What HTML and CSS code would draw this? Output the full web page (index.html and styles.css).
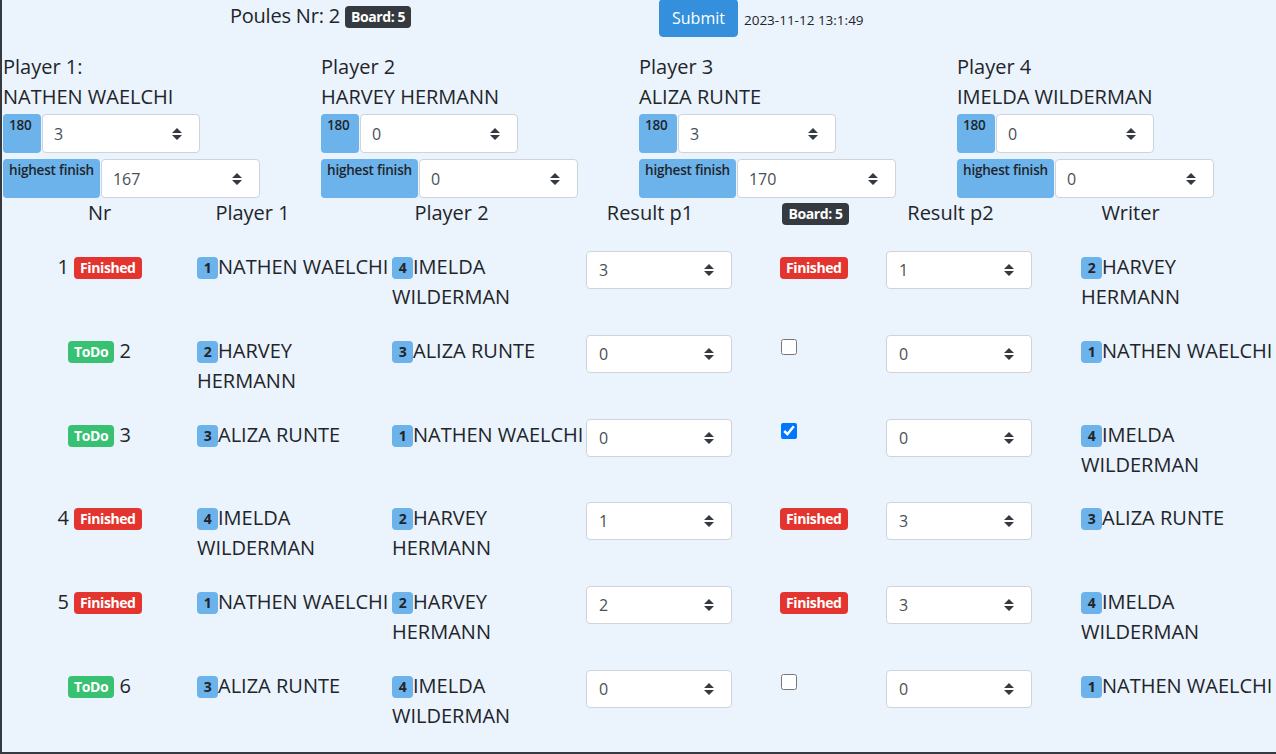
FILE: index.html
```html
<!DOCTYPE html>
<html lang="en">
<head>
    <meta charset="UTF-8">
    <meta name="viewport" content="width=device-width, initial-scale=1.0">
    <title>Poule 2</title>
    <link rel="stylesheet" href="styles.css">
</head>
<body>
    <div class="page">
        <div class="top-bar">
            <div class="poule-title">Poules Nr: 2 <span class="badge badge-dark">Board: 5</span></div>
            <div class="submit-area">
                <button type="submit" class="btn-submit">Submit</button>
                <small class="timestamp">2023-11-12 13:1:49</small>
            </div>
        </div>

        <div class="players">
            <div class="player">
                <div>Player 1:</div>
                <div>NATHEN WAELCHI</div>
                <div class="input-group">
                    <span class="group-label label-180">180</span>
                    <div class="select select-180">3<svg class="caret" viewBox="0 0 10 12"><path d="M5 0L10 5H0z M0 7H10L5 12z"/></svg></div>
                </div>
                <div class="input-group">
                    <span class="group-label">highest finish</span>
                    <div class="select">167<svg class="caret" viewBox="0 0 10 12"><path d="M5 0L10 5H0z M0 7H10L5 12z"/></svg></div>
                </div>
            </div>
            <div class="player">
                <div>Player 2</div>
                <div>HARVEY HERMANN</div>
                <div class="input-group">
                    <span class="group-label label-180">180</span>
                    <div class="select select-180">0<svg class="caret" viewBox="0 0 10 12"><path d="M5 0L10 5H0z M0 7H10L5 12z"/></svg></div>
                </div>
                <div class="input-group">
                    <span class="group-label">highest finish</span>
                    <div class="select">0<svg class="caret" viewBox="0 0 10 12"><path d="M5 0L10 5H0z M0 7H10L5 12z"/></svg></div>
                </div>
            </div>
            <div class="player">
                <div>Player 3</div>
                <div>ALIZA RUNTE</div>
                <div class="input-group">
                    <span class="group-label label-180">180</span>
                    <div class="select select-180">3<svg class="caret" viewBox="0 0 10 12"><path d="M5 0L10 5H0z M0 7H10L5 12z"/></svg></div>
                </div>
                <div class="input-group">
                    <span class="group-label">highest finish</span>
                    <div class="select">170<svg class="caret" viewBox="0 0 10 12"><path d="M5 0L10 5H0z M0 7H10L5 12z"/></svg></div>
                </div>
            </div>
            <div class="player">
                <div>Player 4</div>
                <div>IMELDA WILDERMAN</div>
                <div class="input-group">
                    <span class="group-label label-180">180</span>
                    <div class="select select-180">0<svg class="caret" viewBox="0 0 10 12"><path d="M5 0L10 5H0z M0 7H10L5 12z"/></svg></div>
                </div>
                <div class="input-group">
                    <span class="group-label">highest finish</span>
                    <div class="select">0<svg class="caret" viewBox="0 0 10 12"><path d="M5 0L10 5H0z M0 7H10L5 12z"/></svg></div>
                </div>
            </div>
        </div>

        <div class="games-head">
            <div>Nr</div>
            <div>Player 1</div>
            <div>Player 2</div>
            <div>Result p1</div>
            <div><span class="badge badge-dark">Board: 5</span></div>
            <div>Result p2</div>
            <div>Writer</div>
        </div>

        <!-- game 1 -->
        <div class="game-row">
            <div class="nr">1 <span class="badge badge-danger">Finished</span></div>
            <div><span class="badge badge-info">1</span>NATHEN WAELCHI</div>
            <div><span class="badge badge-info">4</span>IMELDA WILDERMAN</div>
            <div><div class="select select-result">3<svg class="caret" viewBox="0 0 10 12"><path d="M5 0L10 5H0z M0 7H10L5 12z"/></svg></div></div>
            <div class="status"><span class="badge badge-danger">Finished</span></div>
            <div><div class="select select-result">1<svg class="caret" viewBox="0 0 10 12"><path d="M5 0L10 5H0z M0 7H10L5 12z"/></svg></div></div>
            <div><span class="badge badge-info">2</span>HARVEY HERMANN</div>
        </div>

        <!-- game 2 -->
        <div class="game-row">
            <div class="nr"><span class="badge badge-success">ToDo</span> 2</div>
            <div><span class="badge badge-info">2</span>HARVEY HERMANN</div>
            <div><span class="badge badge-info">3</span>ALIZA RUNTE</div>
            <div><div class="select select-result">0<svg class="caret" viewBox="0 0 10 12"><path d="M5 0L10 5H0z M0 7H10L5 12z"/></svg></div></div>
            <div class="status"><input type="checkbox" class="board-check"></div>
            <div><div class="select select-result">0<svg class="caret" viewBox="0 0 10 12"><path d="M5 0L10 5H0z M0 7H10L5 12z"/></svg></div></div>
            <div><span class="badge badge-info">1</span>NATHEN WAELCHI</div>
        </div>

        <!-- game 3 -->
        <div class="game-row">
            <div class="nr"><span class="badge badge-success">ToDo</span> 3</div>
            <div><span class="badge badge-info">3</span>ALIZA RUNTE</div>
            <div><span class="badge badge-info">1</span>NATHEN WAELCHI</div>
            <div><div class="select select-result">0<svg class="caret" viewBox="0 0 10 12"><path d="M5 0L10 5H0z M0 7H10L5 12z"/></svg></div></div>
            <div class="status"><input type="checkbox" class="board-check" checked></div>
            <div><div class="select select-result">0<svg class="caret" viewBox="0 0 10 12"><path d="M5 0L10 5H0z M0 7H10L5 12z"/></svg></div></div>
            <div><span class="badge badge-info">4</span>IMELDA WILDERMAN</div>
        </div>

        <!-- game 4 -->
        <div class="game-row">
            <div class="nr">4 <span class="badge badge-danger">Finished</span></div>
            <div><span class="badge badge-info">4</span>IMELDA WILDERMAN</div>
            <div><span class="badge badge-info">2</span>HARVEY HERMANN</div>
            <div><div class="select select-result">1<svg class="caret" viewBox="0 0 10 12"><path d="M5 0L10 5H0z M0 7H10L5 12z"/></svg></div></div>
            <div class="status"><span class="badge badge-danger">Finished</span></div>
            <div><div class="select select-result">3<svg class="caret" viewBox="0 0 10 12"><path d="M5 0L10 5H0z M0 7H10L5 12z"/></svg></div></div>
            <div><span class="badge badge-info">3</span>ALIZA RUNTE</div>
        </div>

        <!-- game 5 -->
        <div class="game-row">
            <div class="nr">5 <span class="badge badge-danger">Finished</span></div>
            <div><span class="badge badge-info">1</span>NATHEN WAELCHI</div>
            <div><span class="badge badge-info">2</span>HARVEY HERMANN</div>
            <div><div class="select select-result">2<svg class="caret" viewBox="0 0 10 12"><path d="M5 0L10 5H0z M0 7H10L5 12z"/></svg></div></div>
            <div class="status"><span class="badge badge-danger">Finished</span></div>
            <div><div class="select select-result">3<svg class="caret" viewBox="0 0 10 12"><path d="M5 0L10 5H0z M0 7H10L5 12z"/></svg></div></div>
            <div><span class="badge badge-info">4</span>IMELDA WILDERMAN</div>
        </div>

        <!-- game 6 -->
        <div class="game-row">
            <div class="nr"><span class="badge badge-success">ToDo</span> 6</div>
            <div><span class="badge badge-info">3</span>ALIZA RUNTE</div>
            <div><span class="badge badge-info">4</span>IMELDA WILDERMAN</div>
            <div><div class="select select-result">0<svg class="caret" viewBox="0 0 10 12"><path d="M5 0L10 5H0z M0 7H10L5 12z"/></svg></div></div>
            <div class="status"><input type="checkbox" class="board-check"></div>
            <div><div class="select select-result">0<svg class="caret" viewBox="0 0 10 12"><path d="M5 0L10 5H0z M0 7H10L5 12z"/></svg></div></div>
            <div><span class="badge badge-info">1</span>NATHEN WAELCHI</div>
        </div>
    </div>
</body>
</html>
```

FILE: styles.css
```css
body {
    margin: 0;
    font-family: "Open Sans", "Liberation Sans", sans-serif;
    font-size: 20px;
    line-height: 30px;
    color: #212529;
    background-color: #ebf3fd;
}
.page {
    border-left: 2px solid #343a40;
    border-bottom: 2px solid #343a40;
    padding-bottom: 8px;
    box-sizing: border-box;
    min-height: 754px;
}
.top-bar {
    display: grid;
    grid-template-columns: 637px 1fr;
    align-items: start;
}
.poule-title {
    text-align: center;
    padding-top: 1px;
    letter-spacing: -0.2px;
}
.submit-area {
    display: flex;
    align-items: center;
    padding-left: 20px;
}
.btn-submit {
    font-family: inherit;
    font-size: 16px;
    line-height: 24px;
    color: white;
    background-color: #3490dc;
    border: 1px solid #3490dc;
    border-radius: 4px;
    padding: 6px 12px;
    height: 38px;
    margin-top: -1px;
}
.timestamp {
    font-size: 13.5px;
    margin-left: 6px;
    padding-top: 2px;
}
.badge {
    display: inline-block;
    font-size: 14px;
    font-weight: 700;
    line-height: 1;
    padding: 4px 6px;
    border-radius: 4px;
    white-space: nowrap;
    letter-spacing: -0.4px;
    vertical-align: 1px;
}
.badge-dark {
    background-color: #343a40;
    color: white;
}
.badge-danger {
    background-color: #e3342f;
    color: white;
}
.badge-success {
    background-color: #38c172;
    color: white;
}
.badge-info {
    background-color: #6cb2eb;
    color: #212529;
    min-width: 21px;
    box-sizing: border-box;
    text-align: center;
    padding-left: 0;
    padding-right: 0;
}
.players {
    display: grid;
    grid-template-columns: repeat(4, 318px);
    margin-top: 15px;
    padding-left: 1px;
}
.input-group {
    display: flex;
    margin-top: 2px;
}
.input-group + .input-group {
    margin-top: 6px;
}
.group-label {
    background-color: #6cb2eb;
    color: #212529;
    font-size: 13.5px;
    font-weight: 600;
    line-height: 1;
    padding: 5px 6px 0 6px;
    border-radius: 4px;
    height: 39px;
    box-sizing: border-box;
    margin-right: 1px;
    letter-spacing: -0.2px;
}
.label-180 {
    width: 38px;
}
.select {
    display: flex;
    align-items: center;
    justify-content: space-between;
    box-sizing: border-box;
    width: 159px;
    height: 39px;
    padding: 0 17px 0 11px;
    background-color: white;
    border: 1px solid #ced4da;
    border-radius: 4px;
    font-size: 16px;
    color: #495057;
}
.select-180 {
    width: 158px;
}
.select-result {
    width: 146px;
    height: 38px;
    margin-top: -1px;
    padding-left: 12px;
}
.caret {
    width: 10px;
    height: 12px;
    fill: #343a40;
}
.games-head {
    display: grid;
    grid-template-columns: 127px 179px 219px 178px 153px 117px 243px;
    margin-left: 34px;
    padding: 0 0 12px 0;
    text-align: center;
}
.game-row {
    display: grid;
    grid-template-columns: 195px 195px 194px 195px 105px 195px 195px;
    padding: 12px 0;
    height: 59.8px;
}
.nr {
    text-align: center;
}
.status {
    margin-left: -1px;
}
.board-check {
    display: block;
    width: 16px;
    height: 16px;
    margin: 3px 0 0 1px;
}
```
